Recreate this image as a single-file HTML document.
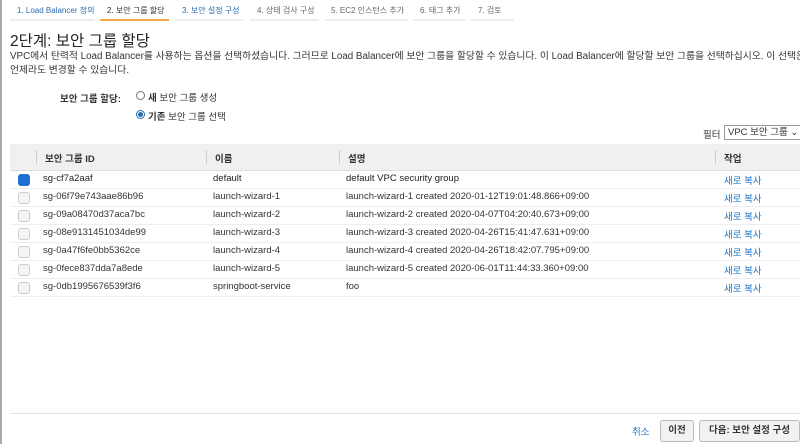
<!DOCTYPE html><html><head><style>
body{margin:0;width:800px;height:444px;overflow:hidden;background:#fff;font-family:"Liberation Sans","Noto Sans CJK KR",sans-serif;color:#333;position:relative}
.a{position:absolute;white-space:nowrap}
.tab{position:absolute;top:5px;font-size:8px;color:#666;white-space:nowrap}
.tl{position:absolute;top:19px;height:2px;background:#eee}
.t{font-size:9.5px}
.cb{position:absolute;left:18px;width:10px;height:10px;border:1px solid #ccc;border-radius:3px;background:#f4f4f4}
.lk{color:#1a73c8}
.r{position:relative;height:17px;border-bottom:1px solid #eee}
</style></head><body>
<div class="a" style="left:0;top:0;width:2px;height:444px;background:#aaa"></div>
<div class="tab" style="left:17px;color:#2a6cb0">1. Load Balancer 정의</div>
<div class="tab" style="left:107px;color:#333">2. 보안 그룹 할당</div>
<div class="tab" style="left:182px;color:#2a6cb0">3. 보안 설정 구성</div>
<div class="tab" style="left:257px">4. 상태 검사 구성</div>
<div class="tab" style="left:331px">5. EC2 인스턴스 추가</div>
<div class="tab" style="left:420px">6. 태그 추가</div>
<div class="tab" style="left:478px">7. 검토</div>
<div class="tl" style="left:10px;width:85px"></div>
<div class="tl" style="left:100px;width:69px;background:#f7a84a"></div>
<div class="tl" style="left:175px;width:69px"></div>
<div class="tl" style="left:250px;width:69px"></div>
<div class="tl" style="left:325px;width:83px"></div>
<div class="tl" style="left:413px;width:53px"></div>
<div class="tl" style="left:471px;width:43px"></div>
<div class="a" style="left:10px;top:29px;font-size:15.5px;color:#222">2단계: 보안 그룹 할당</div>
<div class="a" style="left:10px;top:48px;font-size:9.8px">VPC에서 탄력적 Load Balancer를 사용하는 옵션을 선택하셨습니다. 그러므로 Load Balancer에 보안 그룹을 할당할 수 있습니다. 이 Load Balancer에 할당할 보안 그룹을 선택하십시오. 이 선택은</div>
<div class="a" style="left:10px;top:62px;font-size:9.8px">언제라도 변경할 수 있습니다.</div>
<div class="a" style="left:60px;top:91px;font-size:9.5px;font-weight:bold">보안 그룹 할당:</div>
<div class="a" style="left:136px;top:91px;width:7px;height:7px;border:1px solid #777;border-radius:50%"></div>
<div class="a" style="left:148px;top:90px;font-size:9.5px;font-weight:bold">새 <span style="font-weight:normal">보안 그룹 생성</span></div>
<div class="a" style="left:136px;top:110px;width:7px;height:7px;border:1px solid #2a6cb0;border-radius:50%;background:radial-gradient(#2a6cb0 45%,#fff 55%)"></div>
<div class="a" style="left:148px;top:109px;font-size:9.5px;font-weight:bold">기존 <span style="font-weight:normal">보안 그룹 선택</span></div>
<div class="a" style="left:703px;top:127px;font-size:9.5px">필터</div>
<div class="a" style="left:724px;top:125px;width:80px;height:13px;border:1px solid #999;font-size:9.5px;line-height:13px;padding-left:3px">VPC 보안 그룹 ⌄</div>
<div class="a" style="left:10px;top:144px;width:790px;height:26px;background:#f0f0f0;border-bottom:1px solid #ddd"></div>
<div class="a" style="left:36px;top:150px;width:1px;height:14px;background:#ccc"></div>
<div class="a" style="left:206px;top:150px;width:1px;height:14px;background:#ccc"></div>
<div class="a" style="left:339px;top:150px;width:1px;height:14px;background:#ccc"></div>
<div class="a" style="left:715px;top:150px;width:1px;height:14px;background:#ccc"></div>
<div class="a t" style="left:45px;top:151px;font-weight:bold">보안 그룹 ID</div>
<div class="a t" style="left:215px;top:151px;font-weight:bold">이름</div>
<div class="a t" style="left:348px;top:151px;font-weight:bold">설명</div>
<div class="a t" style="left:724px;top:151px;font-weight:bold">작업</div>
<div style="position:absolute;left:10px;top:171px;width:790px">
<div class="r"><div class="cb" style="left:8px;top:3px;background:#1f6fd0;border-color:#1f6fd0"></div><span class="a t" style="left:33px;top:2px;color:#222">sg-cf7a2aaf</span><span class="a t" style="left:203px;top:2px;color:#222">default</span><span class="a t" style="left:336px;top:2px;color:#222">default VPC security group</span><span class="a t lk" style="left:714px;top:2px">새로 복사</span></div>
<div class="r"><div class="cb" style="left:8px;top:3px"></div><span class="a t" style="left:33px;top:2px">sg-06f79e743aae86b96</span><span class="a t" style="left:203px;top:2px">launch-wizard-1</span><span class="a t" style="left:336px;top:2px">launch-wizard-1 created 2020-01-12T19:01:48.866+09:00</span><span class="a t lk" style="left:714px;top:2px">새로 복사</span></div>
<div class="r"><div class="cb" style="left:8px;top:3px"></div><span class="a t" style="left:33px;top:2px">sg-09a08470d37aca7bc</span><span class="a t" style="left:203px;top:2px">launch-wizard-2</span><span class="a t" style="left:336px;top:2px">launch-wizard-2 created 2020-04-07T04:20:40.673+09:00</span><span class="a t lk" style="left:714px;top:2px">새로 복사</span></div>
<div class="r"><div class="cb" style="left:8px;top:3px"></div><span class="a t" style="left:33px;top:2px">sg-08e9131451034de99</span><span class="a t" style="left:203px;top:2px">launch-wizard-3</span><span class="a t" style="left:336px;top:2px">launch-wizard-3 created 2020-04-26T15:41:47.631+09:00</span><span class="a t lk" style="left:714px;top:2px">새로 복사</span></div>
<div class="r"><div class="cb" style="left:8px;top:3px"></div><span class="a t" style="left:33px;top:2px">sg-0a47f6fe0bb5362ce</span><span class="a t" style="left:203px;top:2px">launch-wizard-4</span><span class="a t" style="left:336px;top:2px">launch-wizard-4 created 2020-04-26T18:42:07.795+09:00</span><span class="a t lk" style="left:714px;top:2px">새로 복사</span></div>
<div class="r"><div class="cb" style="left:8px;top:3px"></div><span class="a t" style="left:33px;top:2px">sg-0fece837dda7a8ede</span><span class="a t" style="left:203px;top:2px">launch-wizard-5</span><span class="a t" style="left:336px;top:2px">launch-wizard-5 created 2020-06-01T11:44:33.360+09:00</span><span class="a t lk" style="left:714px;top:2px">새로 복사</span></div>
<div class="r"><div class="cb" style="left:8px;top:3px"></div><span class="a t" style="left:33px;top:2px">sg-0db1995676539f3f6</span><span class="a t" style="left:203px;top:2px">springboot-service</span><span class="a t" style="left:336px;top:2px">foo</span><span class="a t lk" style="left:714px;top:2px">새로 복사</span></div>
</div>
<div class="a" style="left:10px;top:413px;width:790px;height:1px;background:#e4e4e4"></div>
<div class="a t lk" style="left:632px;top:424px">취소</div>
<div class="a" style="left:660px;top:420px;width:32px;height:20px;border:1px solid #bbb;border-radius:3px;background:#f2f2f2;font-size:9.5px;font-weight:bold;text-align:center;line-height:20px">이전</div>
<div class="a" style="left:699px;top:420px;width:99px;height:20px;border:1px solid #bbb;border-radius:3px;background:#f2f2f2;font-size:9.5px;font-weight:bold;text-align:center;line-height:20px">다음: 보안 설정 구성</div>
</body></html>
